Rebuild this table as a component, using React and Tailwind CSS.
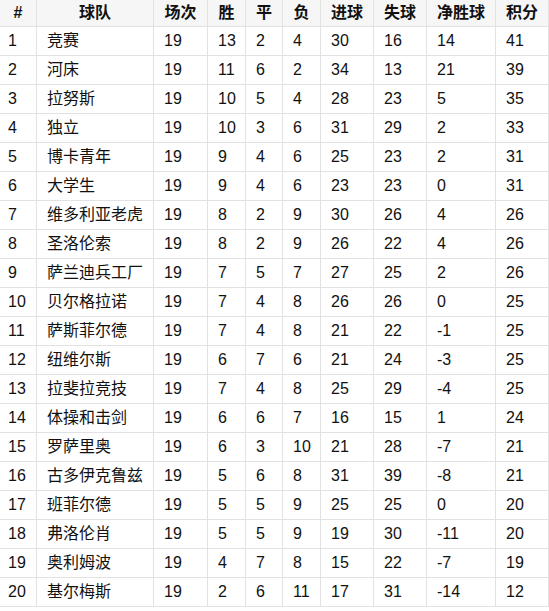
const columns = ["#", "球队", "场次", "胜", "平", "负", "进球", "失球", "净胜球", "积分"];

const rows = [
  [1, "竞赛", 19, 13, 2, 4, 30, 16, 14, 41],
  [2, "河床", 19, 11, 6, 2, 34, 13, 21, 39],
  [3, "拉努斯", 19, 10, 5, 4, 28, 23, 5, 35],
  [4, "独立", 19, 10, 3, 6, 31, 29, 2, 33],
  [5, "博卡青年", 19, 9, 4, 6, 25, 23, 2, 31],
  [6, "大学生", 19, 9, 4, 6, 23, 23, 0, 31],
  [7, "维多利亚老虎", 19, 8, 2, 9, 30, 26, 4, 26],
  [8, "圣洛伦索", 19, 8, 2, 9, 26, 22, 4, 26],
  [9, "萨兰迪兵工厂", 19, 7, 5, 7, 27, 25, 2, 26],
  [10, "贝尔格拉诺", 19, 7, 4, 8, 26, 26, 0, 25],
  [11, "萨斯菲尔德", 19, 7, 4, 8, 21, 22, -1, 25],
  [12, "纽维尔斯", 19, 6, 7, 6, 21, 24, -3, 25],
  [13, "拉斐拉竞技", 19, 7, 4, 8, 25, 29, -4, 25],
  [14, "体操和击剑", 19, 6, 6, 7, 16, 15, 1, 24],
  [15, "罗萨里奥", 19, 6, 3, 10, 21, 28, -7, 21],
  [16, "古多伊克鲁兹", 19, 5, 6, 8, 31, 39, -8, 21],
  [17, "班菲尔德", 19, 5, 5, 9, 25, 25, 0, 20],
  [18, "弗洛伦肖", 19, 5, 5, 9, 19, 30, -11, 20],
  [19, "奥利姆波", 19, 4, 7, 8, 15, 22, -7, 19],
  [20, "基尔梅斯", 19, 2, 6, 11, 17, 31, -14, 12],
];

const grid =
  "grid grid-cols-[36px_116px_53px_37px_36px_37px_52px_52px_68px_52px] gap-px";

export default function App() {
  return (
    <div
      className="w-[549px] bg-white text-[16px] text-[#111]"
      style={{ fontFamily: '"Liberation Sans", "Noto Sans CJK SC", sans-serif' }}
    >
      <div className={`${grid} w-[549px] bg-[#e2e2e2] border-b border-r border-[#e2e2e2]`}>
        {columns.map((c) => (
          <div
            key={c}
            className="h-[26px] bg-[#f6f6f6] font-bold flex items-center justify-center"
          >
            {c}
          </div>
        ))}
        {rows.map((r) =>
          r.map((v, i) => (
            <div
              key={r[0] + "-" + i}
              className={`h-[28px] bg-white flex items-center ${
                i === 0 ? "pl-2" : "pl-[10px]"
              }`}
            >
              {v}
            </div>
          ))
        )}
      </div>
    </div>
  );
}
